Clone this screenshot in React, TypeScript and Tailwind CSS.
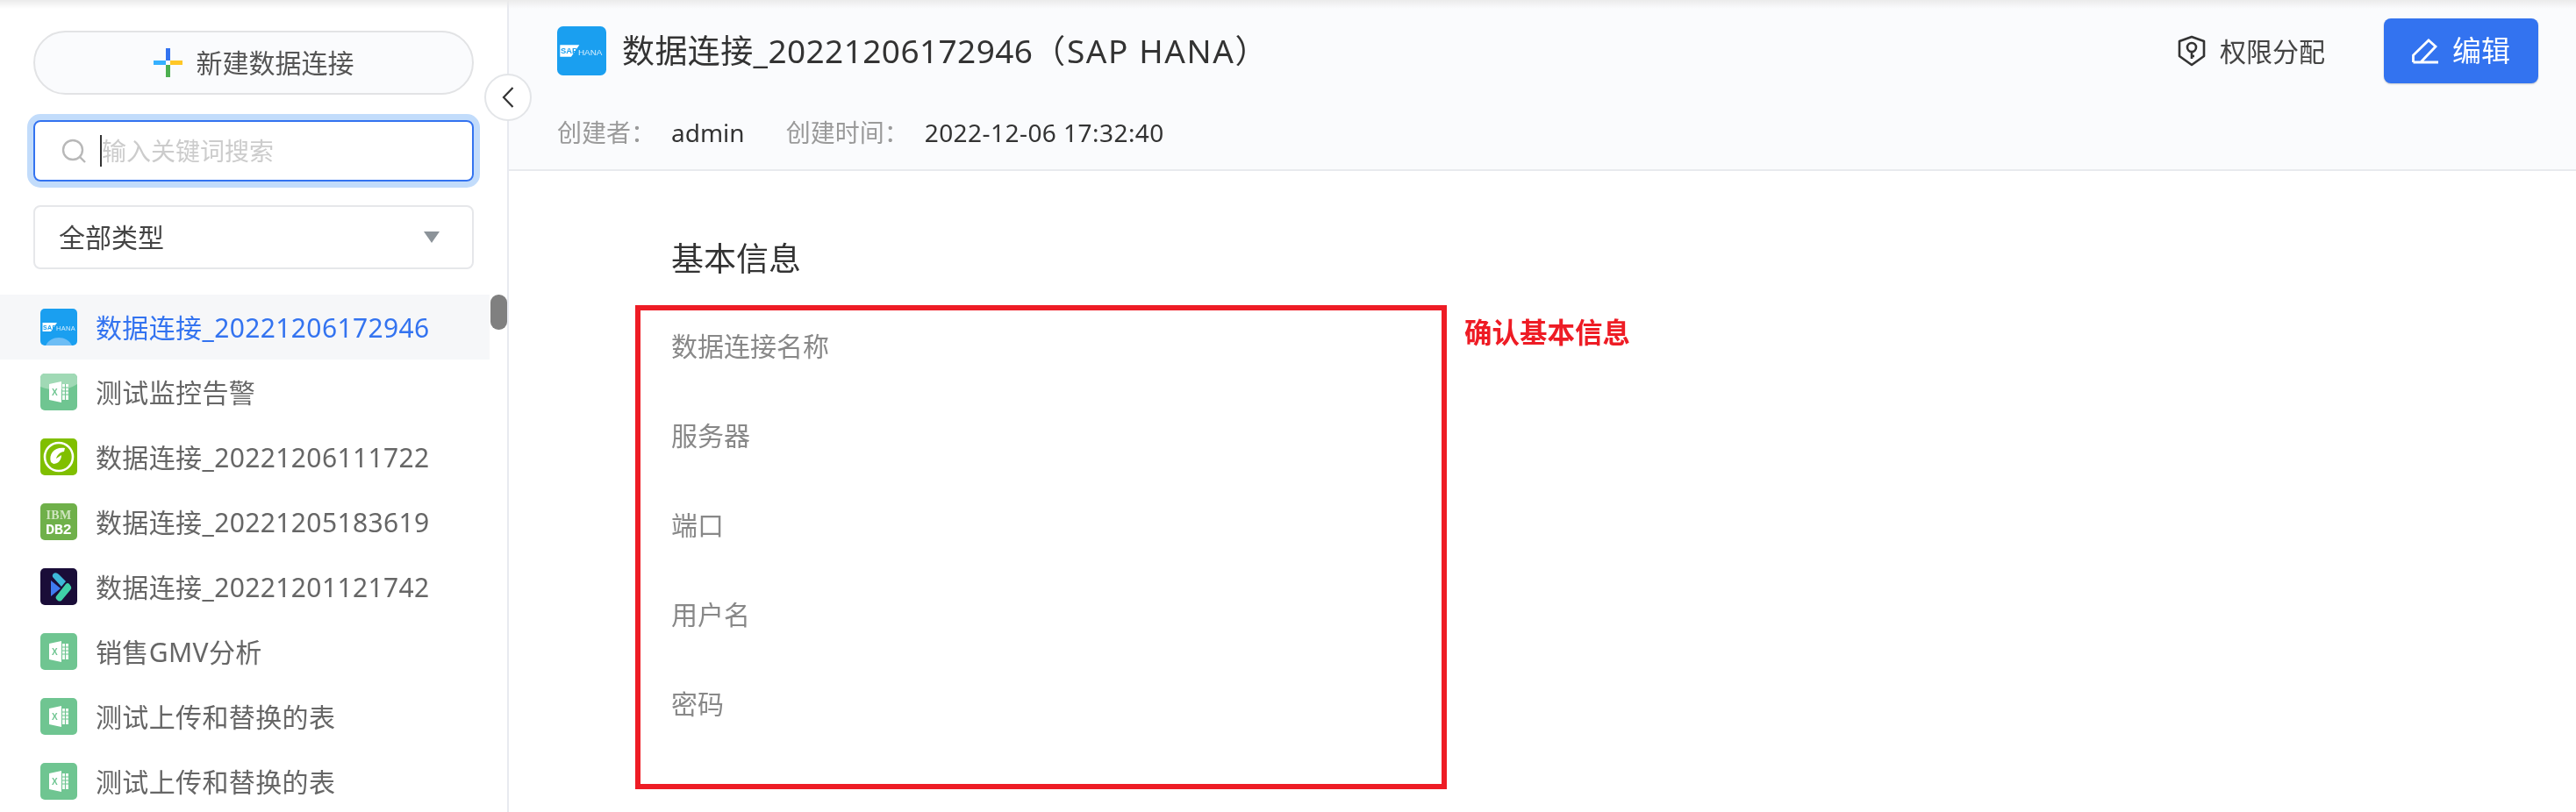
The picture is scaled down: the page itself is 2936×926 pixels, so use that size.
import React from "react";

const FONT = "font-['Noto_Sans','Noto_Sans_CJK_SC',sans-serif]";

function Plus() {
  return (
    <svg width="33" height="33" viewBox="0 0 33 33" className="shrink-0">
      <rect x="14" y="0" width="5" height="14" fill="#3373f0" />
      <rect x="14" y="19" width="5" height="14" fill="#4caf50" />
      <rect x="0" y="14" width="14" height="5" fill="#35b0ff" />
      <rect x="19" y="14" width="14" height="5" fill="#ffc726" />
    </svg>
  );
}

function HanaIcon({ size = 42, hill = true }: { size?: number; hill?: boolean }) {
  return (
    <svg width={size} height={size} viewBox="0 0 42 42" className="shrink-0">
      <rect width="42" height="42" rx="5" fill="#1a9ff0" />
      {hill && <path d="M6 42 C12 30 30 30 36 42 Z" fill="#6dbdf5" />}
      <path d="M2.5 16 H19 L12 26 H2.5 Z" fill="#fff" />
      <text x="3" y="23.5" fontSize="7" fontWeight="700" fill="#1a9ff0" fontFamily="Liberation Sans, sans-serif">SAP</text>
      <text x="18" y="25" fontSize="7.4" fill="#d8eefd" fontFamily="Liberation Sans, sans-serif">HANA</text>
    </svg>
  );
}

function ExcelIcon({ gloss = false }: { gloss?: boolean }) {
  return (
    <svg width="42" height="42" viewBox="0 0 42 42" className="shrink-0">
      <rect width="42" height="42" rx="5" fill="#6fc591" />
      {gloss && <path d="M0 5 a5 5 0 0 1 5 -5 H37 a5 5 0 0 1 5 5 V12 C30 20 12 20 0 15 Z" fill="#a0d9b5" />}
      <path d="M10 12 L24 9 V33 L10 30 Z" fill="#fff" />
      <rect x="25" y="12" width="7" height="18" fill="#fff" opacity="0.9" />
      <path d="M25 16 H32 M25 20 H32 M25 24 H32 M28.5 12 V30" stroke="#6fc591" strokeWidth="1" />
      <text x="13" y="25" fontSize="10" fontWeight="700" fill="#6fc591" fontFamily="Liberation Sans, sans-serif">X</text>
    </svg>
  );
}

function GreenIcon() {
  return (
    <svg width="42" height="42" viewBox="0 0 42 42" className="shrink-0">
      <rect width="42" height="42" rx="5" fill="#80bf00" />
      <circle cx="21" cy="21" r="16" fill="none" stroke="#fff" strokeWidth="2.6" />
      <path d="M12 27 C9 17 17 9 28 11 L27 15 C23 15 19 19 18 23 L24 19 C24 25 20 29 15 29 Z" fill="#fff" />
    </svg>
  );
}

function Db2Icon() {
  return (
    <svg width="42" height="42" viewBox="0 0 42 42" className="shrink-0">
      <rect width="42" height="42" rx="5" fill="#6fb04a" />
      <text x="21" y="18" textAnchor="middle" fontSize="14" fontWeight="700" fill="#cfe5bf" fontFamily="Liberation Serif, serif">IBM</text>
      <text x="21" y="35" textAnchor="middle" fontSize="17" fontWeight="700" fill="#fff" fontFamily="Liberation Mono, monospace" textLength="30">DB2</text>
    </svg>
  );
}

function DarkIcon() {
  return (
    <svg width="42" height="42" viewBox="0 0 42 42" className="shrink-0">
      <rect width="42" height="42" rx="5" fill="#1a0d38" />
      <path d="M15 6 Q18 4 21 7 L29 15 L24 21 L14 10 Q13 8 15 6 Z" fill="#3db8d8" />
      <path d="M12 14 L23 23 L12 32 Z" fill="#3f7bf0" />
      <path d="M18 32 L29 18 Q31 16 33 18 L35 21 Q36 23 34 25 L24 37 Q22 38 20 37 L18 35 Q17 33 18 32 Z" fill="#3fd0a8" />
    </svg>
  );
}

const rows: { name: string; icon: React.ReactNode; active?: boolean }[] = [
  { name: "数据连接_20221206172946", icon: <HanaIcon />, active: true },
  { name: "测试监控告警", icon: <ExcelIcon gloss /> },
  { name: "数据连接_20221206111722", icon: <GreenIcon /> },
  { name: "数据连接_20221205183619", icon: <Db2Icon /> },
  { name: "数据连接_20221201121742", icon: <DarkIcon /> },
  { name: "销售GMV分析", icon: <ExcelIcon /> },
  { name: "测试上传和替换的表", icon: <ExcelIcon /> },
  { name: "测试上传和替换的表", icon: <ExcelIcon /> },
];

const fields = ["数据连接名称", "服务器", "端口", "用户名", "密码"];

export default function App() {
  return (
    <div className={`${FONT} relative flex h-[926px] w-[2936px] overflow-hidden bg-white blur-[0.6px]`}>
      <div className="absolute inset-x-0 top-0 z-20 h-[10px] bg-gradient-to-b from-[#ebebeb] to-transparent" />

      <aside className="relative flex w-[580px] shrink-0 flex-col border-r-[2px] border-[#e8eaf0] pt-[35px]">
        <div className="flex flex-col px-[38px]">
          <button className="flex h-[73px] items-center justify-center gap-[16px] rounded-[37px] border-[2px] border-[#e2e3e5] bg-[#fafbfd] text-[30px] text-[#555]">
            <Plus />
            <span>新建数据连接</span>
          </button>
          <div className="mt-[29px] flex h-[70px] items-center rounded-[8px] border-[2px] border-[#3373f0] pl-[30px] shadow-[0_0_0_7px_#c2dcfb]">
            <svg width="28" height="28" viewBox="0 0 28 28" fill="none" stroke="#b8b8b8" strokeWidth="2.4" className="shrink-0">
              <circle cx="13" cy="13" r="11" />
              <path d="M21 21 L27 27" />
            </svg>
            <span className="ml-[16px] h-[36px] w-[2px] shrink-0 bg-[#333]" />
            <input
              readOnly
              placeholder="输入关键词搜索"
              className="min-w-0 flex-1 bg-transparent text-[28px] outline-none placeholder:text-[#cccccc]"
            />
          </div>
          <div className="mt-[27px] flex h-[73px] items-center justify-between rounded-[8px] border-[2px] border-[#e6e7ea] pl-[27px] pr-[37px] text-[30px] text-[#444]">
            <span>全部类型</span>
            <span className="h-0 w-0 border-x-[9px] border-t-[13px] border-x-transparent border-t-[#8c9399]" />
          </div>
        </div>

        <div className="relative mt-[29px] flex flex-col">
          {rows.map((r, i) => (
            <div
              key={i}
              className={`flex h-[74px] w-[558px] shrink-0 items-center gap-[21px] pl-[46px] text-[30px] tracking-[0.37px] ${
                r.active ? "bg-[#f6f7f9] text-[#3373f0]" : "text-[#666]"
              }`}
            >
              {r.icon}
              <span>{r.name}</span>
            </div>
          ))}
          <div className="absolute right-0 top-0 h-[40px] w-[19px] rounded-[9px] bg-[#808080]" />
        </div>

        <button className="absolute left-[552px] top-[84px] z-10 flex h-[54px] w-[54px] items-center justify-center rounded-full border-[2px] border-[#e3e5e8] bg-white">
          <svg width="14" height="24" viewBox="0 0 14 24" fill="none" stroke="#333" strokeWidth="2.2">
            <path d="M12.5 1 L2 12 L12.5 23" />
          </svg>
        </button>
      </aside>

      <main className="flex min-w-0 flex-1 flex-col">
        <header className="h-[195px] shrink-0 border-b-[2px] border-[#e8eaee] bg-[#fafbfd] pl-[55px] pr-[43px]">
          <div className="mt-[21px] flex h-[74px] items-center justify-between">
            <div className="flex items-center gap-[18px]">
              <HanaIcon size={56} hill={false} />
              <span className="text-[37px] tracking-[0.4px] text-[#333]">
                数据连接_20221206172946<span className="tracking-[1.6px]">（SAP HANA）</span>
              </span>
            </div>
            <div className="flex items-center">
              <svg width="32" height="36" viewBox="0 0 32 36" fill="none" stroke="#333" strokeWidth="2.6" className="shrink-0">
                <path d="M16 2 L30 7 V24 L16 34 L2 24 V7 Z" strokeLinejoin="round" />
                <circle cx="16" cy="14" r="5" />
                <path d="M16 19 V27 M16 24 H19" />
              </svg>
              <span className="ml-[16px] text-[30px] text-[#444]">权限分配</span>
              <button className="ml-[67px] flex h-[74px] w-[176px] items-center justify-center gap-[16px] rounded-[8px] bg-[#3373f0] text-[33px] text-white shadow-[0_1px_2px_rgba(0,0,0,0.2)]">
                <svg width="30" height="30" viewBox="0 0 30 30" fill="none" stroke="#fff" strokeWidth="2.8" className="shrink-0">
                  <path d="M1.5 28 H30 M1.5 28 V20 L19 3 L27 10 L10 28" />
                </svg>
                <span>编辑</span>
              </button>
            </div>
          </div>
          <div className="mt-[36px] flex h-[40px] items-center text-[28px]">
            <span className="text-[#9a9a9a]">创建者：</span>
            <span className="ml-[18px] text-[#333]">admin</span>
            <span className="ml-[47px] text-[#9a9a9a]">创建时间：</span>
            <span className="ml-[18px] tracking-[0.45px] text-[#333]">2022-12-06 17:32:40</span>
          </div>
        </header>

        <section className="relative flex-1 pl-[185px] pt-[75px]">
          <h2 className="h-[50px] text-[37px] font-normal leading-[50px] text-[#333]">基本信息</h2>
          <div className="mt-[23px] flex flex-col">
            {fields.map((f) => (
              <div key={f} className="flex h-[102px] items-center text-[30px] text-[#888]">
                {f}
              </div>
            ))}
          </div>
          <div className="absolute left-[144px] top-[153px] h-[552px] w-[925px] border-[6px] border-[#ee1c25]" />
          <div className="absolute left-[1089px] top-[164px] text-[31.5px] font-bold leading-[40px] text-[#ee1c25]">确认基本信息</div>
        </section>
      </main>
    </div>
  );
}
